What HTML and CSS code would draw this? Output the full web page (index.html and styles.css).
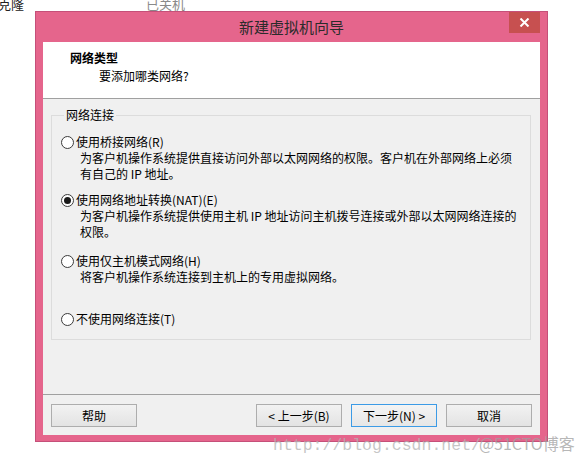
FILE: index.html
```html
<!DOCTYPE html>
<html lang="zh-CN">
<head>
<meta charset="utf-8">
<title>新建虚拟机向导</title>
<link rel="stylesheet" href="styles.css">
</head>
<body>
<div class="desk">
  <span class="desk-a">克隆</span>
  <span class="desk-b">已关机</span>
</div>

<div class="window">
  <div class="titlebar">
    <span class="title">新建虚拟机向导</span>
    <span class="close">
      <svg width="11" height="9" viewBox="0 0 11 9"><path d="M1.5 0.5 L9.5 8.5 M9.5 0.5 L1.5 8.5" stroke="#fff" stroke-width="2"/></svg>
    </span>
  </div>
  <div class="client">
    <div class="header">
      <div class="h-title">网络类型</div>
      <div class="h-sub">要添加哪类网络?</div>
    </div>
    <div class="body">
      <fieldset class="group">
        <legend>网络连接</legend>
        <div class="opt opt1">
          <div class="opt-line"><span class="radio"></span>使用桥接网络(R)</div>
          <div class="desc">为客户机操作系统提供直接访问外部以太网网络的权限。客户机在外部网络上必须<br>有自己的 IP 地址。</div>
        </div>
        <div class="opt opt2">
          <div class="opt-line"><span class="radio checked"></span>使用网络地址转换(NAT)(E)</div>
          <div class="desc">为客户机操作系统提供使用主机 IP 地址访问主机拨号连接或外部以太网网络连接的<br>权限。</div>
        </div>
        <div class="opt opt3">
          <div class="opt-line"><span class="radio"></span>使用仅主机模式网络(H)</div>
          <div class="desc">将客户机操作系统连接到主机上的专用虚拟网络。</div>
        </div>
        <div class="opt opt4">
          <div class="opt-line"><span class="radio"></span>不使用网络连接(T)</div>
        </div>
      </fieldset>
    </div>
    <div class="footer">
      <button class="btn">帮助</button>
      <span class="spacer"></span>
      <button class="btn">&lt; 上一步(B)</button>
      <button class="btn default">下一步(N) &gt;</button>
      <button class="btn">取消</button>
    </div>
  </div>
</div>

<div class="watermark"><span class="wm-url">http://blog.csdn.net/</span><span class="wm-brand">@51CTO博客</span></div>
</body>
</html>
```

FILE: styles.css
```css
* { box-sizing: border-box; }
html, body {
  margin: 0;
  padding: 0;
  background: #ffffff;
  width: 585px;
  height: 466px;
  overflow: hidden;
  font-family: "Noto Sans CJK SC", "Noto Sans", sans-serif;
  font-size: 12px;
  color: #000;
}
body { position: relative; }

.desk {
  position: absolute;
  top: -4px;
  left: -2px;
  font-size: 13px;
  line-height: 16px;
}
.desk-a { position: absolute; left: 0; color: #222; white-space: nowrap; }
.desk-b { position: absolute; left: 148px; color: #8a8a8a; white-space: nowrap; }

.window {
  position: absolute;
  left: 35px;
  top: 11px;
  width: 513px;
  height: 431px;
  background: #e5658c;
  border: 1px solid #c55079;
  display: flex;
  flex-direction: column;
  padding: 0 7px 6px 7px;
}

.titlebar {
  height: 30px;
  flex: none;
  display: flex;
  align-items: center;
  justify-content: center;
  position: relative;
}
.title {
  font-size: 15px;
  color: #2b2b2b;
  line-height: 20px;
}
.close {
  position: absolute;
  right: 0px;
  top: 0px;
  width: 31px;
  height: 21px;
  background: #c75050;
  display: flex;
  align-items: center;
  justify-content: center;
}

.client {
  flex: 1;
  display: flex;
  flex-direction: column;
  background: #f0f0f0;
}

.header {
  height: 57px;
  flex: none;
  background: #ffffff;
  border-bottom: 1px solid #a0a0a0;
  padding-top: 8px;
  line-height: 16px;
}
.h-title {
  font-weight: bold;
  padding-left: 27px;
}
.h-sub {
  padding-left: 56px;
  margin-top: 2px;
}

.body {
  flex: 1;
  padding: 8px 9px 0 8px;
  border-bottom: 1px solid #a0a0a0;
}

.group {
  margin: 0;
  border: 1px solid #dcdcdc;
  padding: 11px 0 0 9px;
  height: 233px;
  line-height: 16px;
}
.group legend {
  padding: 0 2px;
  margin-left: 3px;
  line-height: 16px;
}

.opt-line {
  display: flex;
  align-items: center;
  height: 16px;
}
.desc {
  padding-left: 19px;
}
.opt2 { margin-top: 10px; }
.opt3 { margin-top: 13px; }
.opt4 { margin-top: 26px; }

.radio {
  width: 13px;
  height: 13px;
  border: 1px solid #3b3b3b;
  border-radius: 50%;
  background: #fff;
  margin-right: 2px;
  flex: none;
  display: flex;
  align-items: center;
  justify-content: center;
}
.radio.checked::after {
  content: "";
  width: 7px;
  height: 7px;
  border-radius: 50%;
  background: #1a1a1a;
}

.footer {
  height: 40px;
  flex: none;
  display: flex;
  align-items: flex-start;
  padding: 9px 8px 0 8px;
  gap: 9px;
}
.spacer { flex: 1; }
.btn {
  width: 86px;
  height: 23px;
  border: 1px solid #adadad;
  background: linear-gradient(#f2f2f2, #e3e3e3);
  font-family: "Noto Sans CJK SC", "Noto Sans", sans-serif;
  font-size: 12px;
  line-height: 16px;
  color: #000;
  padding: 0;
  border-radius: 0;
}
.btn.default {
  border-color: #3c9be6;
  background: linear-gradient(#f4f4f4, #e6e6e6);
}

.watermark {
  position: absolute;
  left: 273px;
  top: 432px;
  font-size: 17px;
  line-height: 22px;
  white-space: nowrap;
  display: flex;
  align-items: baseline;
}
.wm-url {
  font-family: "Liberation Mono", "DejaVu Sans Mono", monospace;
  color: rgba(180, 180, 180, 0.75);
  font-size: 16.5px;
}
.wm-brand {
  font-family: "Noto Sans CJK SC", sans-serif;
  color: rgba(160, 160, 160, 0.75);
  margin-left: -2px;
  font-size: 16px;
}
```
